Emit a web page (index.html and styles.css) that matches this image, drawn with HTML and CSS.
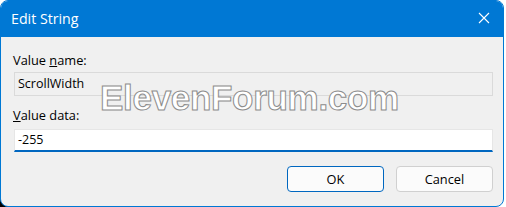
FILE: index.html
```html
<!DOCTYPE html>
<html>
<head>
  <title>Edit String</title>
  <link rel="stylesheet" href="styles.css">
</head>
<body>
  <div class="corner-shadow"></div>
  <div class="window">
    <div class="title-bar">
      <span class="title">Edit String</span>
      <svg class="close-icon" width="12" height="12" viewBox="0 0 12 12">
        <path d="M1 1 L11 11 M11 1 L1 11" stroke="#ffffff" stroke-width="1.1" fill="none"/>
      </svg>
    </div>
    <div class="dialog-body">
      <label class="field-label">Value <u>n</u>ame:</label>
      <div class="text-box readonly">ScrollWidth</div>
      <label class="field-label second"><u>V</u>alue data:</label>
      <div class="text-box active">-255</div>
      <div class="button-row">
        <button class="btn default">OK</button>
        <button class="btn">Cancel</button>
      </div>
    </div>
  </div>
  <div class="watermark">ElevenForum.com</div>
</body>
</html>
```

FILE: styles.css
```css
body {
  margin: 0;
  width: 506px;
  height: 207px;
  background-color: #ffffff;
  font-family: "Open Sans", "Noto Sans", sans-serif;
  position: relative;
  overflow: hidden;
}

.corner-shadow {
  position: absolute;
  left: 0;
  bottom: 0;
  width: 10px;
  height: 10px;
  background-color: #000000;
}

.window {
  position: relative;
  width: 502px;
  height: 205px;
  border: 1px solid #0078d4;
  border-radius: 8px;
  background-color: #f0f0f0;
  overflow: hidden;
}

.title-bar {
  height: 36px;
  background-color: #0078d4;
  display: flex;
  align-items: center;
  justify-content: space-between;
  padding: 0 13px 0 10px;
}

.title {
  color: #ffffff;
  font-size: 14.2px;
  margin-top: -2px;
}

.close-icon {
  margin-top: -2px;
}

.dialog-body {
  display: flex;
  flex-direction: column;
  padding: 0 10px 0 12px;
}

.field-label {
  font-size: 12.8px;
  color: #000000;
  line-height: 16px;
  margin-top: 15px;
  margin-bottom: 4px;
}

.field-label.second {
  margin-top: 11px;
  margin-bottom: 6px;
}

.text-box {
  margin-left: 1px;
  height: 24px;
  box-sizing: border-box;
  font-size: 12.5px;
  line-height: 22px;
  padding: 0 3px;
  color: #000000;
}

.text-box.readonly {
  background-color: #f0f0f0;
  border: 1px solid #dadada;
}

.text-box.active {
  height: 23px;
  background-color: #ffffff;
  border: 1px solid #e6e6e6;
  border-bottom: 2px solid #0067c0;
  line-height: 20px;
}

.button-row {
  display: flex;
  justify-content: flex-end;
  gap: 12px;
  margin-top: 14px;
}

.btn {
  width: 97px;
  height: 26px;
  font-family: "Open Sans", "Noto Sans", sans-serif;
  font-size: 12.8px;
  color: #000000;
  background-color: #fbfbfb;
  border: 1px solid #d0d0d0;
  border-radius: 4px;
}

.btn.default {
  border-color: #0067c0;
}

.watermark {
  position: absolute;
  left: 100px;
  top: 78px;
  font-family: "Liberation Sans", Arial, sans-serif;
  font-weight: bold;
  font-size: 35px;
  color: #ffffff;
  -webkit-text-stroke: 1px #8c8c8c;
  letter-spacing: -0.3px;
}
```
